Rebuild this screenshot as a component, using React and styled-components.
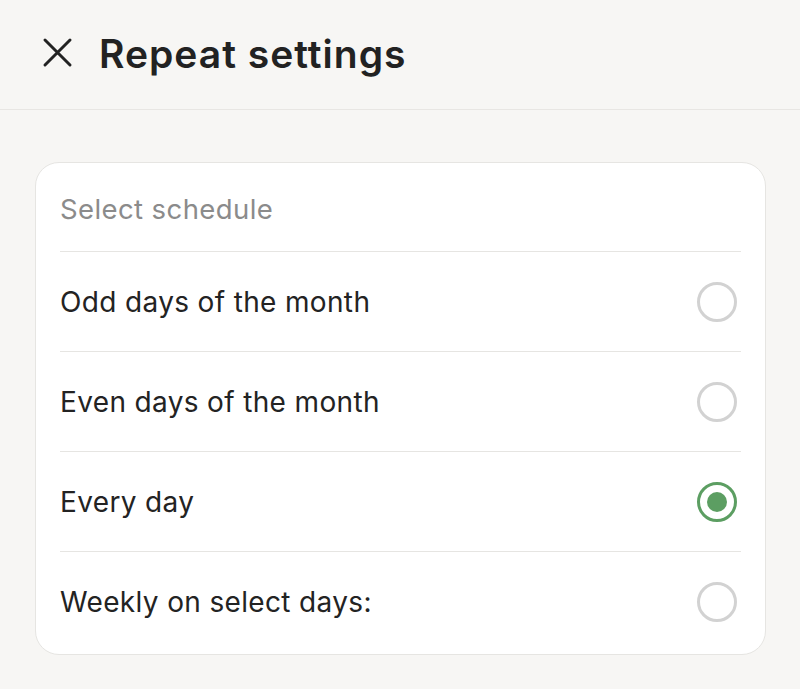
import React, { useState } from 'react'
import styled, { createGlobalStyle } from 'styled-components'

const GlobalStyle = createGlobalStyle`
  html, body {
    margin: 0;
    padding: 0;
    background: #f7f6f4;
    font-family: Inter, 'Noto Sans', sans-serif;
    -webkit-font-smoothing: antialiased;
  }
`

const Page = styled.div`
  width: 800px;
  height: 689px;
  background: #f7f6f4;
  overflow: hidden;
`

const Header = styled.header`
  height: 110px;
  display: flex;
  align-items: center;
  gap: 26px;
  padding-left: 42px;
  border-bottom: 1.5px solid #e8e6e3;
  box-sizing: border-box;
`

const CloseButton = styled.button`
  border: 0;
  background: none;
  padding: 0;
  display: flex;
  align-items: center;
  justify-content: center;
  width: 31px;
  height: 31px;
  cursor: pointer;
  margin-top: -4px;
`

const Title = styled.h1`
  margin: 0;
  font-size: 39px;
  font-weight: 600;
  color: #222;
  letter-spacing: 1px;
  margin-top: -2px;
`

const Body = styled.main`
  padding: 52px 34px 0 35px;
`

const Card = styled.section`
  background: #fff;
  border: 1.5px solid #e6e5e2;
  border-radius: 24px;
  padding: 0 24px 0 24px;
  box-sizing: border-box;
  height: 493px;
`

const CardLabel = styled.div`
  height: 89px;
  display: flex;
  align-items: center;
  padding-top: 4px;
  box-sizing: border-box;
  font-size: 27.5px;
  letter-spacing: 0.4px;
  color: #8b8b8b;
  border-bottom: 1.5px solid #e6e5e2;
`

const Row = styled.label`
  height: 99px;
  display: flex;
  align-items: center;
  justify-content: space-between;
  font-size: 28px;
  letter-spacing: 0.35px;
  color: #232323;
  border-bottom: ${p => (p.$last ? 'none' : '1.5px solid #e6e5e2')};
  cursor: pointer;
`

const Radio = styled.span`
  width: 40px;
  height: 40px;
  border-radius: 50%;
  box-sizing: border-box;
  border: 3px solid ${p => (p.$checked ? '#5c9e62' : '#d2d2d2')};
  display: flex;
  align-items: center;
  justify-content: center;
  margin-right: 4px;

  &::after {
    content: '';
    width: 20px;
    height: 20px;
    border-radius: 50%;
    background: #5c9e62;
    display: ${p => (p.$checked ? 'block' : 'none')};
  }
`

const options = [
  'Odd days of the month',
  'Even days of the month',
  'Every day',
  'Weekly on select days:'
]

export default function App() {
  const [selected, setSelected] = useState(2)
  return (
    <Page>
      <GlobalStyle />
      <Header>
        <CloseButton aria-label='close'>
          <svg width='31' height='31' viewBox='0 0 31 31'>
            <path d='M3 3 L28 28 M28 3 L3 28' stroke='#222' strokeWidth='3' strokeLinecap='round' />
          </svg>
        </CloseButton>
        <Title>Repeat settings</Title>
      </Header>
      <Body>
        <Card>
          <CardLabel>Select schedule</CardLabel>
          {options.map((o, i) => (
            <Row key={o} $last={i === options.length - 1} onClick={() => setSelected(i)}>
              {o}
              <Radio $checked={selected === i} />
            </Row>
          ))}
        </Card>
      </Body>
    </Page>
  )
}
